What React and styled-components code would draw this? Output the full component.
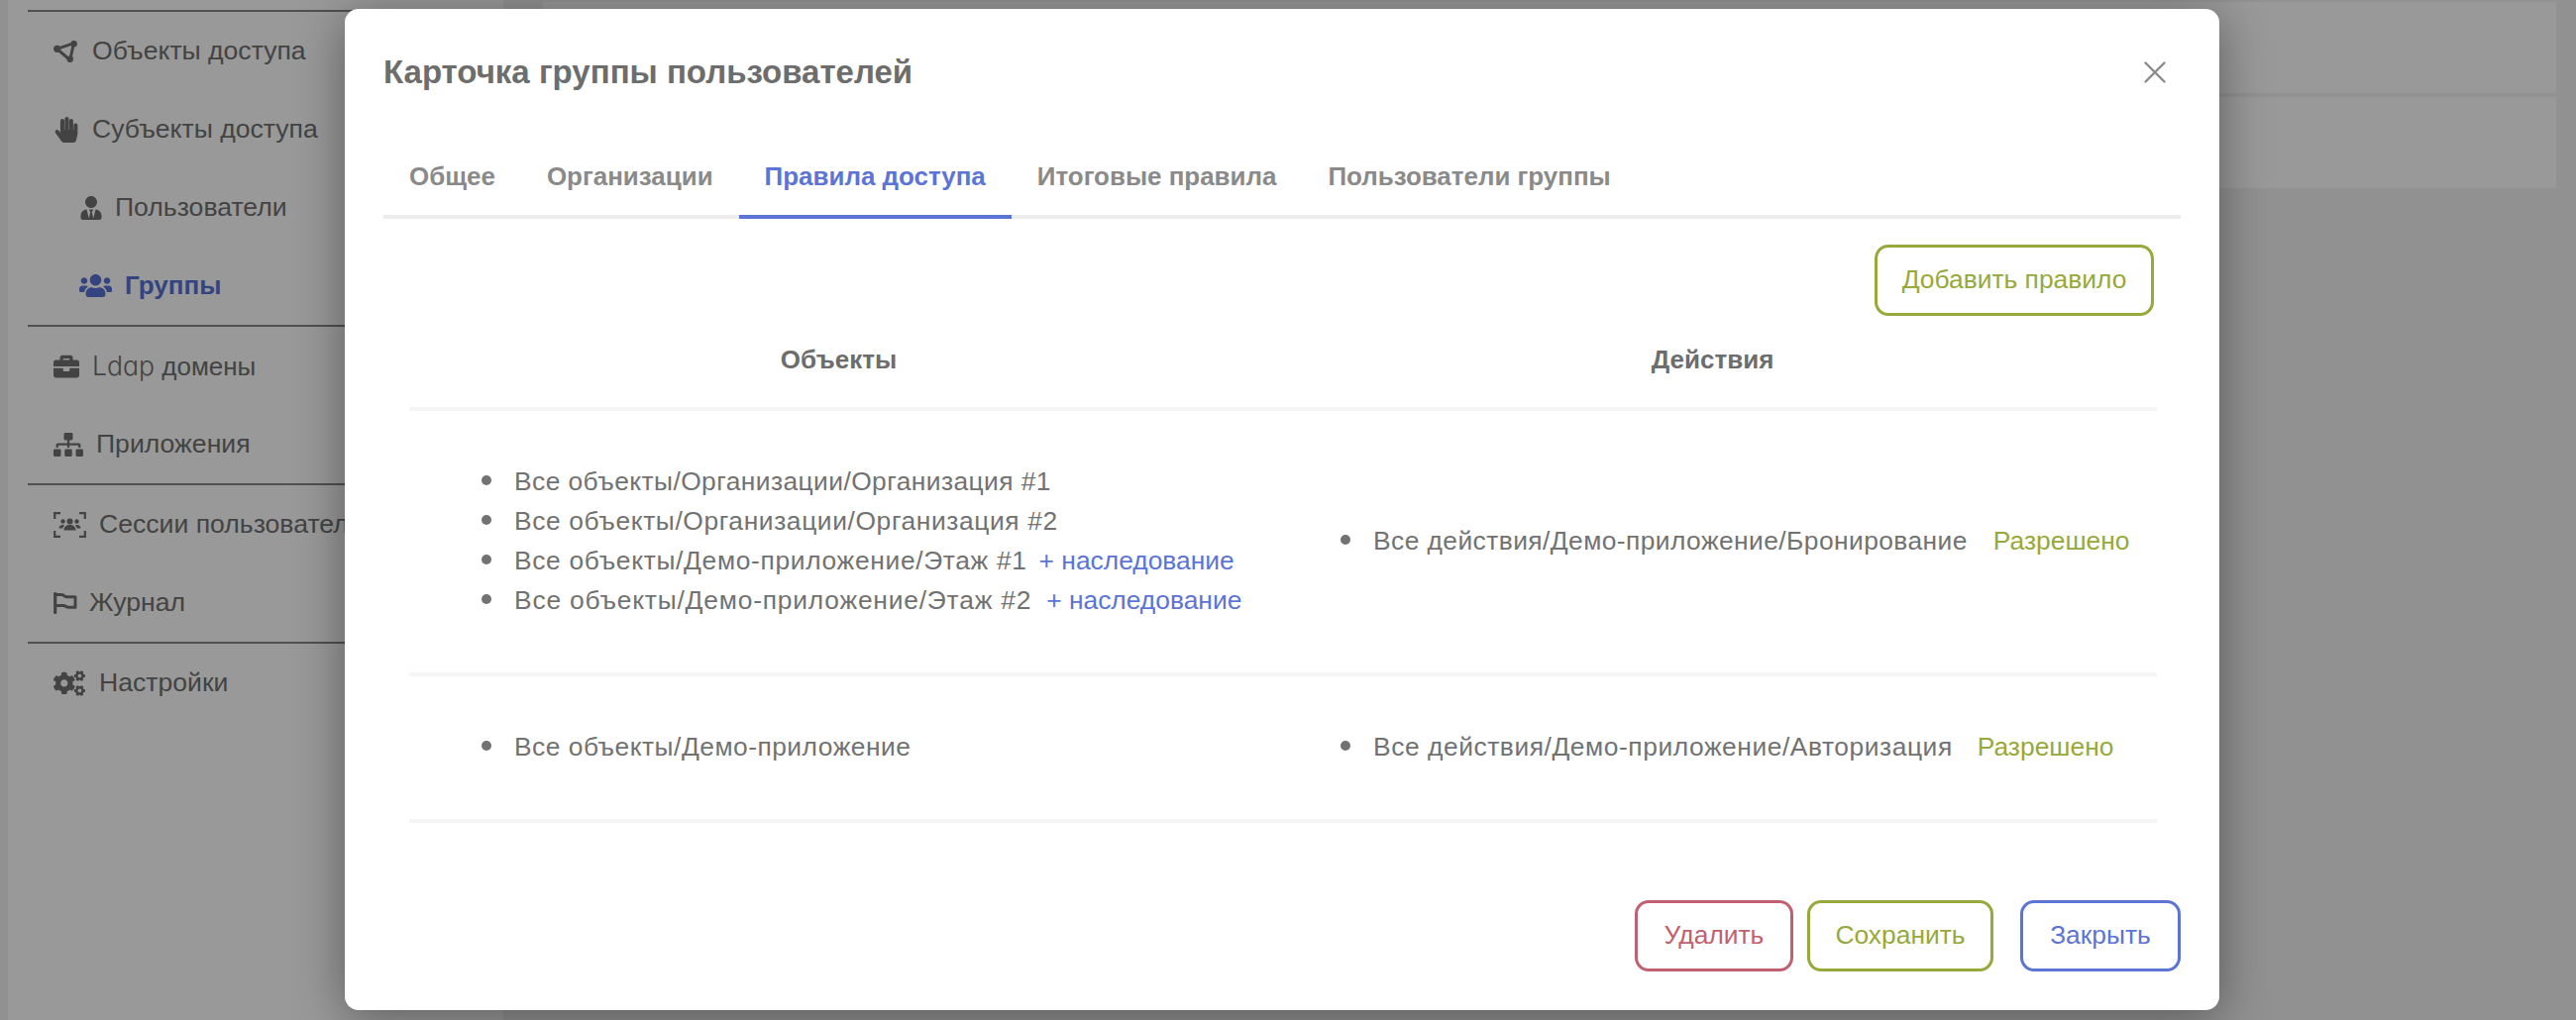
import React from 'react';
import styled, { createGlobalStyle } from 'styled-components';
import { FaHandPaper, FaUserTie, FaUsers, FaBriefcase, FaSitemap, FaCogs } from 'react-icons/fa';

const GlobalStyle = createGlobalStyle`
  html, body {
    margin: 0;
    padding: 0;
    background: #f2f2f2;
    font-family: "Liberation Sans", Arial, sans-serif;
  }
  * {
    box-sizing: border-box;
  }
`;

const Page = styled.div`
  position: relative;
  display: flex;
  width: 2600px;
  height: 1030px;
  overflow: hidden;
  background: #f2f2f2;
`;

const Sidebar = styled.nav`
  width: 500px;
  margin-left: 8px;
  padding: 10px 20px 0;
  background: #fff;
  flex-shrink: 0;
`;

const Section = styled.div`
  border-top: 2px solid #858585;
`;

const Item = styled.div`
  display: flex;
  align-items: center;
  height: 79px;
  padding-left: ${p => (p.$nested ? 52 : 26)}px;
  gap: ${p => p.$gap}px;
  font-size: ${p => (p.$active ? 26 : 26.6)}px;
  white-space: nowrap;
  font-weight: ${p => (p.$active ? 700 : 400)};
  color: ${p => (p.$active ? '#5872d6' : '#717171')};

  svg {
    flex-shrink: 0;
  }
`;

const LdapLabel = styled.span`
  font-size: 26px;
`;

const LdapWord = styled.span`
  font-family: Inter, "Liberation Sans", sans-serif;
  font-size: 26.6px;
  font-weight: 300;
  font-feature-settings: "cv11";
`;

const Main = styled.main`
  display: flex;
  flex-direction: column;
  gap: 4px;
  width: 2032px;
  margin-left: 40px;
  padding-top: 2px;
`;

const Card = styled.div`
  height: 92px;
  background: #fff;
`;

const Overlay = styled.div`
  position: absolute;
  inset: 0;
  padding: 9px 360px 10px 348px;
  background: rgba(0, 0, 0, 0.4);
`;

const Modal = styled.div`
  height: 1011px;
  padding: 32px 39px 39px;
  background: #fff;
  border-radius: 14px;
  box-shadow: 0 8px 50px rgba(0, 0, 0, 0.4);
`;

const TitleRow = styled.div`
  display: flex;
  justify-content: space-between;
  align-items: center;
  height: 64px;
  margin-bottom: 34px;
`;

const Title = styled.h2`
  margin: 0;
  font-size: 33px;
  font-weight: 700;
  color: #6d6d6d;
`;

const CloseIcon = styled.svg`
  width: 22px;
  height: 22px;
  margin-right: 15px;
`;

const TabBar = styled.div`
  display: flex;
  border-bottom: 4px solid #ececec;
`;

const Tab = styled.div`
  display: flex;
  align-items: center;
  height: 82px;
  margin-bottom: -4px;
  padding: 0 26px;
  font-size: 25.95px;
  font-weight: 700;
  color: ${p => (p.$active ? '#5b74d6' : '#8a8a8a')};
  border-bottom: 4px solid ${p => (p.$active ? '#5b74d6' : 'transparent')};
`;

const Toolbar = styled.div`
  display: flex;
  justify-content: flex-end;
  padding: 26px 27px 0 0;
`;

const Button = styled.button`
  width: ${p => p.$width}px;
  height: 72px;
  padding: 0 0 2px;
  font-family: inherit;
  font-size: 26.4px;
  color: ${p => p.$color};
  background: #fff;
  border: 3.5px solid ${p => p.$color};
  border-radius: 14px;
`;

const Table = styled.div`
  margin: 0 24px 0 26px;
`;

const Row = styled.div`
  display: grid;
  grid-template-columns: 867px 1fr;
  align-items: center;
  padding: 51px 0 53px;
  border-bottom: 4px solid #f5f5f5;
`;

const HeadRow = styled(Row)`
  height: 96px;
  padding: 0 0 4px;
`;

const HeadCell = styled.div`
  font-size: 26px;
  font-weight: 700;
  text-align: center;
  color: #6d6d6d;
`;

const List = styled.ul`
  margin: 0;
  padding: 0 0 0 106px;
  list-style: none;
  font-size: 26.4px;
  line-height: 40px;
  color: #727272;
`;

const ListItem = styled.li`
  position: relative;
  white-space: nowrap;

  &::before {
    content: '';
    position: absolute;
    left: -33px;
    top: 14px;
    width: 10px;
    height: 10px;
    border-radius: 50%;
    background: #727272;
  }
`;

const PathText = styled.span`
  letter-spacing: ${p => p.$spacing}px;
`;

const Note = styled.span`
  margin-left: ${p => p.$gap}px;
  color: ${p => p.$color};
`;

const Footer = styled.div`
  display: flex;
  justify-content: flex-end;
  gap: 14px;
  margin-top: 78px;
`;

const CloseButton = styled(Button)`
  margin-left: 13px;
`;

const green = '#96a93a';
const blue = '#5b74d6';
const red = '#c25f70';

const ObjectsIcon = () => (
  <svg width="24" height="22" viewBox="0 0 24 22" fill="none">
    <path d="M3.5 8.3 20.5 2.7 16.7 19.5Z" stroke="#717171" strokeWidth="3" strokeLinejoin="round" />
    <circle cx="3.7" cy="8.3" r="3.6" fill="#717171" />
    <circle cx="20.6" cy="3.2" r="3.3" fill="#717171" />
    <circle cx="16.7" cy="18.8" r="3.3" fill="#717171" />
  </svg>
);

const SessionsIcon = () => (
  <svg width="33" height="26" viewBox="0 0 33 26" fill="none">
    <path d="M7 1.2H1.2V7M26 1.2h5.8V7M7 24.8H1.2V19M26 24.8h5.8V19" stroke="#717171" strokeWidth="2.2" />
    <circle cx="16.5" cy="9.5" r="3" fill="#717171" />
    <circle cx="9.5" cy="9.5" r="2.2" fill="#717171" />
    <circle cx="23.5" cy="9.5" r="2.2" fill="#717171" />
    <path d="M10.5 18.5c0-3.4 2.6-5.4 6-5.4s6 2 6 5.4ZM5.5 16.5c0-2 1.7-3.5 4-3.5.6 0 1.2.1 1.7.4-1 1-1.7 1.9-1.9 3.1ZM27.5 16.5c0-2-1.7-3.5-4-3.5-.6 0-1.2.1-1.7.4 1 1 1.7 1.9 1.9 3.1Z" fill="#717171" />
  </svg>
);

const JournalIcon = () => (
  <svg width="24" height="22" viewBox="0 0 24 22" fill="none" stroke="#717171" strokeLinecap="round" strokeLinejoin="round">
    <path d="M1.7 1.5v19" strokeWidth="3.2" />
    <path d="M2 2.5h6c2.2 0 3 2.2 5 2.2h9v10.6H15c-2 0-3-1.8-5-1.8H2" strokeWidth="3" />
  </svg>
);

const tabs = ['Общее', 'Организации', 'Правила доступа', 'Итоговые правила', 'Пользователи группы'];

const App = () => (
  <Page>
    <GlobalStyle />
    <Sidebar>
      <Section>
        <Item $gap={15}><ObjectsIcon />Объекты доступа</Item>
        <Item $gap={13}><FaHandPaper size={26} />Субъекты доступа</Item>
        <Item $nested $gap={12}><FaUserTie size={24} />Пользователи</Item>
        <Item $nested $active $gap={13}><FaUsers size={33} />Группы</Item>
      </Section>
      <Section>
        <Item $gap={13}><FaBriefcase size={26} /><LdapLabel><LdapWord>Ldap</LdapWord> домены</LdapLabel></Item>
        <Item $gap={13}><FaSitemap size={30} />Приложения</Item>
      </Section>
      <Section>
        <Item $gap={13}><SessionsIcon />Сессии пользователей</Item>
        <Item $gap={12}><JournalIcon />Журнал</Item>
      </Section>
      <Section>
        <Item $gap={14}><FaCogs size={32} />Настройки</Item>
      </Section>
    </Sidebar>
    <Main>
      <Card />
      <Card />
    </Main>
    <Overlay>
      <Modal>
        <TitleRow>
          <Title>Карточка группы пользователей</Title>
          <CloseIcon viewBox="0 0 22 22" fill="none" stroke="#8a8a8a" strokeWidth="2.4" strokeLinecap="round">
            <path d="M1.5 1.5l19 19M20.5 1.5l-19 19" />
          </CloseIcon>
        </TitleRow>
        <TabBar>
          {tabs.map(t => (
            <Tab key={t} $active={t === 'Правила доступа'}>{t}</Tab>
          ))}
        </TabBar>
        <Toolbar>
          <Button $width={282} $color={green}>Добавить правило</Button>
        </Toolbar>
        <Table>
          <HeadRow>
            <HeadCell>Объекты</HeadCell>
            <HeadCell>Действия</HeadCell>
          </HeadRow>
          <Row>
            <List>
              <ListItem><PathText $spacing={0.42}>Все объекты/Организации/Организация #1</PathText></ListItem>
              <ListItem><PathText $spacing={0.6}>Все объекты/Организации/Организация #2</PathText></ListItem>
              <ListItem><PathText $spacing={0.66}>Все объекты/Демо-приложение/Этаж #1</PathText><Note $gap={12} $color={blue}>+ наследование</Note></ListItem>
              <ListItem><PathText $spacing={0.79}>Все объекты/Демо-приложение/Этаж #2</PathText><Note $gap={15} $color={blue}>+ наследование</Note></ListItem>
            </List>
            <List>
              <ListItem><PathText $spacing={0.42}>Все действия/Демо-приложение/Бронирование</PathText><Note $gap={26} $color={green}>Разрешено</Note></ListItem>
            </List>
          </Row>
          <Row>
            <List>
              <ListItem><PathText $spacing={0.48}>Все объекты/Демо-приложение</PathText></ListItem>
            </List>
            <List>
              <ListItem><PathText $spacing={0.55}>Все действия/Демо-приложение/Авторизация</PathText><Note $gap={25} $color={green}>Разрешено</Note></ListItem>
            </List>
          </Row>
        </Table>
        <Footer>
          <Button $width={160} $color={red}>Удалить</Button>
          <Button $width={188} $color={green}>Сохранить</Button>
          <CloseButton $width={162} $color={blue}>Закрыть</CloseButton>
        </Footer>
      </Modal>
    </Overlay>
  </Page>
);

export default App;
